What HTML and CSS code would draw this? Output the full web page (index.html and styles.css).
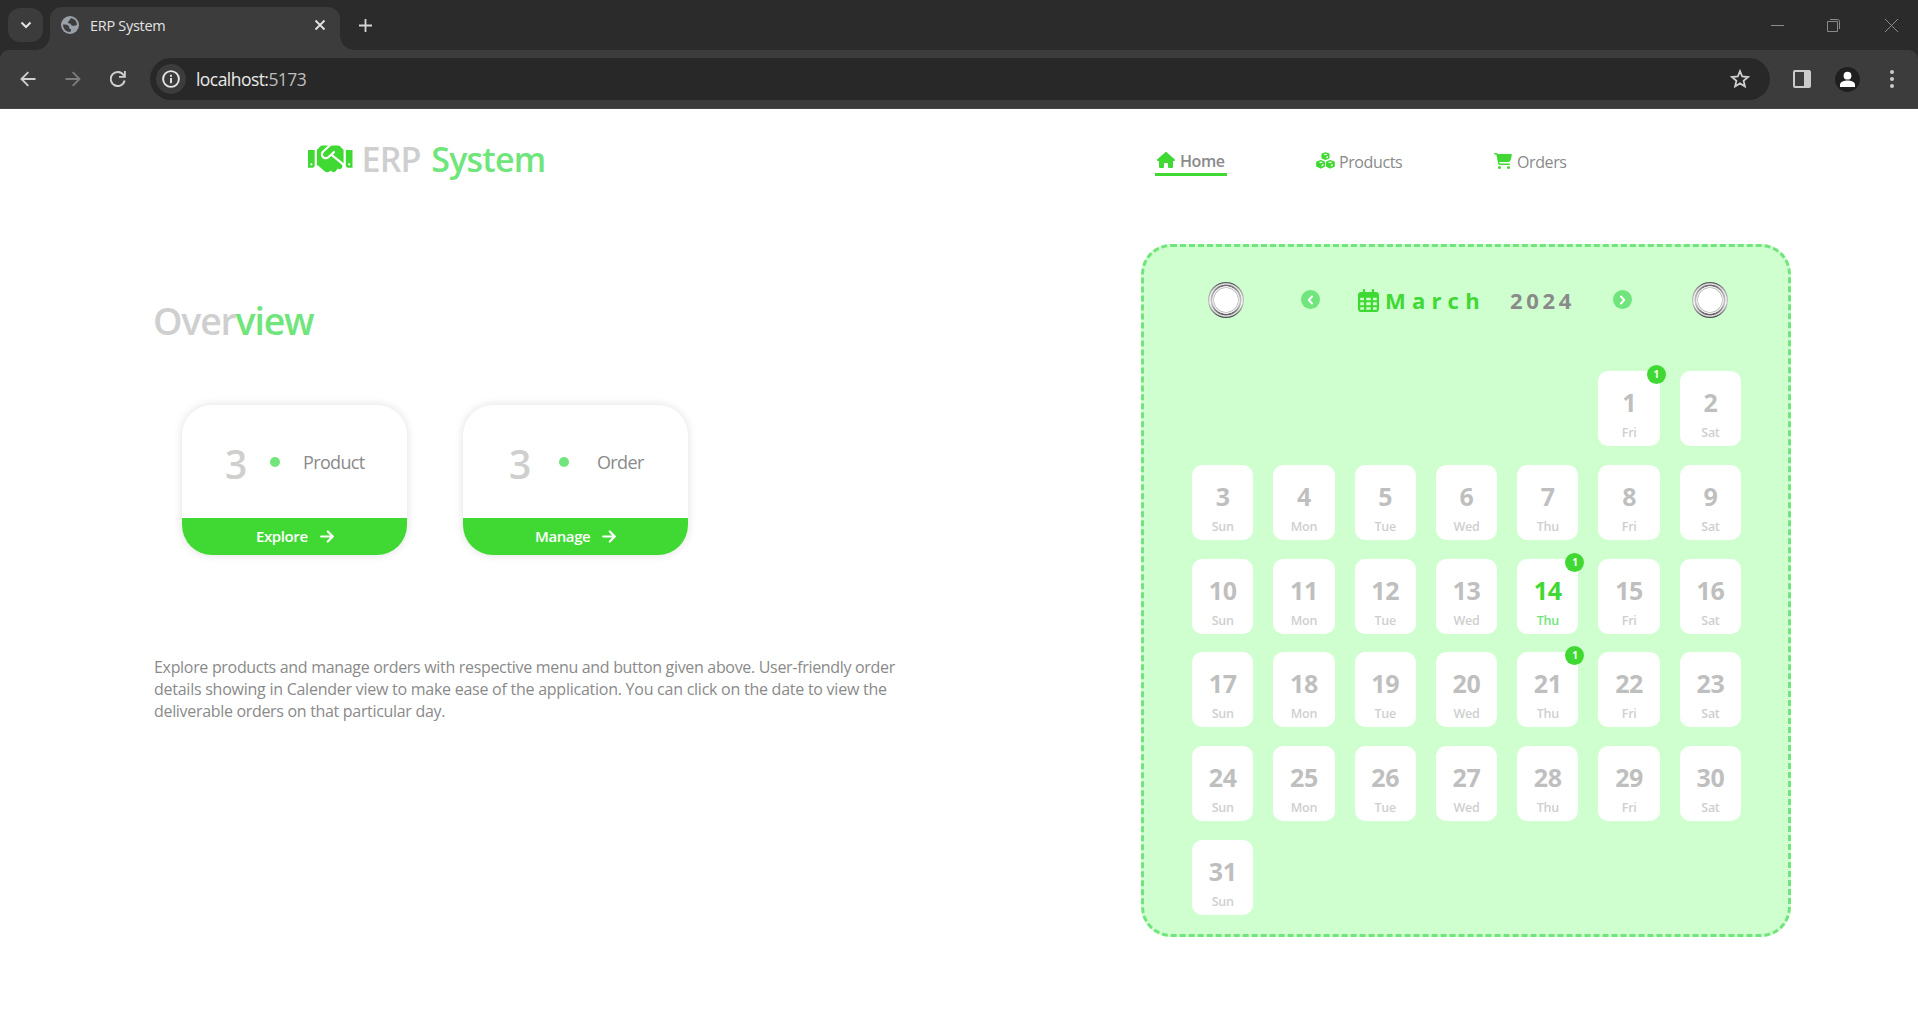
FILE: index.html
```html
<!DOCTYPE html>
<html lang="en">
<head>
<meta charset="utf-8">
<title>ERP System</title>
<link rel="stylesheet" href="styles.css">
</head>
<body>
<div class="browser">
  <div class="tabstrip">
    <div class="tab-search"><svg width="12" height="8" viewBox="0 0 12 8"><path d="M1.5 1.5 6 6l4.500-4.500" fill="none" stroke="#e3e3e3" stroke-width="2"/></svg></div>
    <div class="tab">
      <svg width="18" height="18" viewBox="0 0 18 18"><circle cx="9" cy="9" r="9" fill="#9aa0a8"/><path d="M2 8.500c3 0 5 .3 6 2 .8 1.400-.3 2.500 1.500 2.500 1 0 .7 1.500-.3 3C5.500 16.200 2 13 2 8.500zM10 2.200c3.500.3 5.800 3 6 6.300-1.500 1.300-3 1.500-4.500 1.300C9.500 9.500 10.500 7.500 8.500 7.500 6.500 7.300 6.500 5.500 8 5c1-.3.500-2 2-2.800z" fill="#3c3c3c"/></svg>
      <span class="tab-title">ERP System</span>
      <svg width="12" height="12" viewBox="0 0 12 12"><path d="M1.500 1.500l9 9m0-9l-9 9" stroke="#e3e3e3" stroke-width="1.800"/></svg>
    </div>
    <svg class="new-tab" width="13" height="13" viewBox="0 0 13 13"><path d="M6.500 0v13M0 6.500h13" stroke="#d6d6d6" stroke-width="1.800"/></svg>
    <div class="window-controls">
      <svg width="13" height="13" viewBox="0 0 13 13"><path d="M0 6.500h13" stroke="#8a8a8a"/></svg>
      <svg width="13" height="13" viewBox="0 0 13 13"><path d="M.5 2.500h10v10H.5zM3 .5h7.500a2 2 0 0 1 2 2V10" fill="none" stroke="#8a8a8a"/></svg>
      <svg width="13" height="13" viewBox="0 0 13 13"><path d="M0 0l13 13m0-13L0 13" stroke="#8a8a8a"/></svg>
    </div>
  </div>
  <div class="toolbar">
    <div class="nav-buttons">
      <svg width="16" height="16" viewBox="0 0 16 16"><path d="M15.500 8H2M8.300 1.200 1.500 8l6.800 6.800" fill="none" stroke="#cfcfcf" stroke-width="1.900"/></svg>
      <svg width="16" height="16" viewBox="0 0 16 16"><path d="M.5 8H14M7.700 1.200 14.500 8l-6.800 6.800" fill="none" stroke="#7d7d7d" stroke-width="1.900"/></svg>
      <svg width="16" height="16" viewBox="0 0 16 16"><path d="M14.600 9.500A7 7 0 1 1 13.500 4" fill="none" stroke="#cfcfcf" stroke-width="2"/><path d="M15.800 0v6.800H9V5h3.500l1.500-1.500V0z" fill="#cfcfcf"/></svg>
    </div>
    <div class="address">
      <div class="info"><svg width="18" height="18" viewBox="0 0 18 18"><circle cx="9" cy="9" r="7.900" fill="none" stroke="#e6e6e6" stroke-width="1.900"/><path d="M9 8v5.200M9 4.700v2" stroke="#e6e6e6" stroke-width="1.900"/></svg></div>
      <span class="url">localhost:<span class="port">5173</span></span>
      <svg class="star" width="20" height="20" viewBox="0 0 20 20"><path d="M10 2.200l2.200 5.300 5.800.5-4.400 3.800 1.300 5.600-4.900-3-4.900 3 1.300-5.600L2 8l5.800-.5z" fill="none" stroke="#cfcfcf" stroke-width="1.800"/></svg>
    </div>
    <div class="toolbar-end">
      <svg width="18" height="18" viewBox="0 0 18 18"><rect width="18" height="18" rx="2" fill="#cbcbcb"/><path d="M2 2h9v14H2z" fill="#3c3c3c"/></svg>
      <svg width="25" height="25" viewBox="0 0 25 25"><circle cx="12.500" cy="12.500" r="12.500" fill="#1f1f1f"/><circle cx="12.500" cy="8.700" r="3.900" fill="#fff"/><path d="M5 20v-2.300c0-3 4.500-4.200 7.500-4.200s7.500 1.200 7.500 4.200V20z" fill="#fff"/></svg>
      <svg width="4" height="18" viewBox="0 0 4 18"><g fill="#cbcbcb"><circle cx="2" cy="2" r="2"/><circle cx="2" cy="9" r="2"/><circle cx="2" cy="16" r="2"/></g></svg>
    </div>
  </div>
</div>

<header class="site-header">
  <div class="brand">
    <svg width="44.500" height="35.600" viewBox="0 0 640 512"><path d="M434.7 64h-85.900c-8 0-15.700 3-21.600 8.400l-98.300 90c-.1.1-.2.3-.3.4-16.600 15.600-16.300 40.500-2.100 56 12.700 13.900 39.400 17.600 56.100 2.700.1-.1.3-.1.4-.2l79.900-73.200c6.500-5.900 16.700-5.500 22.600 1 6 6.500 5.500 16.600-1 22.600l-26.100 23.900L504 313.800c2.900 2.400 5.500 5 7.900 7.700V128l-54.600-54.600c-5.900-6-14.100-9.400-22.600-9.400zM544 128.200v223.900c0 17.700 14.300 32 32 32h64V128.200h-96zm48 223.900c-8.800 0-16-7.200-16-16s7.200-16 16-16 16 7.200 16 16-7.200 16-16 16zM0 384h64c17.700 0 32-14.300 32-32V128.200H0V384zm48-63.900c8.800 0 16 7.200 16 16s-7.200 16-16 16-16-7.200-16-16c0-8.900 7.200-16 16-16zm435.900 18.600L334.600 217.500l-30 27.500c-29.700 27.100-75.200 24.500-101.700-4.400-26.900-29.400-24.800-74.900 4.400-101.700L289.100 64h-83.800c-8.500 0-16.600 3.400-22.600 9.400L128 128v223.900h18.300l90.500 81.900c27.400 22.300 67.700 18.100 90-9.300l.2-.2 17.900 15.500c15.900 13 39.400 10.500 52.300-5.400l31.400-38.600 5.400 4.400c13.700 11.100 33.900 9.100 45-4.700l9.500-11.700c11.200-13.800 9.100-33.900-4.600-45.100z"/></svg>
    <span class="brand-name">ERP <span class="accent">System</span></span>
  </div>
  <nav class="menu">
    <a class="active"><svg width="18" height="16" viewBox="0 0 576 512"><path d="M575.8 255.500c0 18-15 32.100-32 32.100h-32l.7 160.200c0 2.700-.2 5.400-.5 8.100V472c0 22.100-17.900 40-40 40H392c-22.100 0-40-17.900-40-40V384c0-17.700-14.300-32-32-32H256c-17.700 0-32 14.300-32 32v88c0 22.100-17.900 40-40 40H104c-22.100 0-40-17.900-40-40V287.600H32c-18 0-32-14-32-32.100 0-9 3-17 10-24L266.400 8c7-7 15-8 22-8s15 2 21 7L564.800 231.500c8 7 12 15 11 24z"/></svg><span>Home</span></a>
    <a class="products"><svg width="19" height="17" viewBox="0 0 576 512"><g stroke-width="36" stroke-linejoin="round" class="cube"><path d="M288 22l105 42v116l-105 46-105-46V64z"/><path d="M148 258l110 44v126l-110 58-124-58V302z"/><path d="M428 258l124 44v126l-124 58-110-58V302z"/></g><path class="facet" d="M288 48l62 24-62 26-62-26zM312 146l52-24v42l-52 24zM148 284l62 26-62 28-62-28zM172 386l56-26v50l-56 26zM428 284l62 26-62 28-62-28zM452 386l56-26v50l-56 26z"/></svg><span>Products</span></a>
    <a class="orders"><svg width="18" height="16" viewBox="0 0 576 512"><path d="M0 24C0 10.700 10.700 0 24 0H69.500c22 0 41.500 12.800 50.600 32h411c26.300 0 45.500 25 38.600 50.400l-41 152.300c-8.500 31.400-37 53.300-69.500 53.300H170.700l5.400 28.500c2.200 11.300 12.100 19.500 23.600 19.500H488c13.300 0 24 10.700 24 24s-10.700 24-24 24H199.700c-34.600 0-64.300-24.600-70.700-58.500L77.400 54.500c-.7-3.800-4-6.500-7.900-6.500H24C10.700 48 0 37.300 0 24zM128 464a48 48 0 1 1 96 0 48 48 0 1 1-96 0zm336-48a48 48 0 1 1 0 96 48 48 0 1 1 0-96z"/></svg><span>Orders</span></a>
  </nav>
</header>

<main class="content">
  <section class="overview">
    <h1>Over<span class="accent">view</span></h1>
    <div class="cards">
      <article class="card">
        <div class="card-body product"><span class="count">3</span><i class="dot"></i><span class="label">Product</span></div>
        <div class="card-action explore"><span>Explore</span><svg width="14" height="13" viewBox="0 0 14 13"><path d="M1.200 6.500H12M7.800 1.500l5 5-5 5"/></svg></div>
      </article>
      <article class="card">
        <div class="card-body order"><span class="count">3</span><i class="dot"></i><span class="label">Order</span></div>
        <div class="card-action manage"><span>Manage</span><svg width="14" height="13" viewBox="0 0 14 13"><path d="M1.200 6.500H12M7.800 1.500l5 5-5 5"/></svg></div>
      </article>
    </div>
    <p class="intro">Explore products and manage orders with respective menu and button given above. User-friendly order<br><span class="loose">details showing in Calender view to make ease of the application. You can click on the date to view the</span><br>deliverable orders on that particular day.</p>
  </section>

  <section class="calendar">
    <div class="calendar-head">
      <i class="ring"></i>
      <button class="step prev"><svg width="7" height="10" viewBox="0 0 7 10"><path d="M5 1.500 1.800 5 5 8.500"/></svg></button>
      <h2><svg width="21" height="23" viewBox="0 0 448 512" preserveAspectRatio="none"><path d="M152 24c0-13.300-10.700-24-24-24s-24 10.700-24 24V64H64C28.700 64 0 92.700 0 128v320c0 35.300 28.700 64 64 64H384c35.300 0 64-28.700 64-64V128c0-35.300-28.700-64-64-64H344V24c0-13.300-10.700-24-24-24s-24 10.700-24 24V64H152V24zM48 192h80v56H48V192zm0 104h80v64H48V296zm128 0h96v64H176V296zm144 0h80v64H320V296zm80-48H320V192h80v56zm0 160v40c0 8.800-7.200 16-16 16H320V408h80zm-128 0v56H176V408h96zm-144 0v56H64c-8.800 0-16-7.200-16-16V408h80zM272 248H176V192h96v56z"/></svg><span class="month">March</span><span class="year">2024</span></h2>
      <button class="step next"><svg width="7" height="10" viewBox="0 0 7 10"><path d="M2 1.500 5.200 5 2 8.500"/></svg></button>
      <i class="ring"></i>
    </div>
    <div class="days">
      <div class="day first"><b>1</b><span>Fri</span><em>1</em></div><div class="day"><b>2</b><span>Sat</span></div>
      <div class="day"><b>3</b><span>Sun</span></div><div class="day"><b>4</b><span>Mon</span></div><div class="day"><b>5</b><span>Tue</span></div><div class="day"><b>6</b><span>Wed</span></div><div class="day"><b>7</b><span>Thu</span></div><div class="day"><b>8</b><span>Fri</span></div><div class="day"><b>9</b><span>Sat</span></div>
      <div class="day"><b>10</b><span>Sun</span></div><div class="day"><b>11</b><span>Mon</span></div><div class="day"><b>12</b><span>Tue</span></div><div class="day"><b>13</b><span>Wed</span></div><div class="day today"><b>14</b><span>Thu</span><em>1</em></div><div class="day"><b>15</b><span>Fri</span></div><div class="day"><b>16</b><span>Sat</span></div>
      <div class="day"><b>17</b><span>Sun</span></div><div class="day"><b>18</b><span>Mon</span></div><div class="day"><b>19</b><span>Tue</span></div><div class="day"><b>20</b><span>Wed</span></div><div class="day"><b>21</b><span>Thu</span><em>1</em></div><div class="day"><b>22</b><span>Fri</span></div><div class="day"><b>23</b><span>Sat</span></div>
      <div class="day"><b>24</b><span>Sun</span></div><div class="day"><b>25</b><span>Mon</span></div><div class="day"><b>26</b><span>Tue</span></div><div class="day"><b>27</b><span>Wed</span></div><div class="day"><b>28</b><span>Thu</span></div><div class="day"><b>29</b><span>Fri</span></div><div class="day"><b>30</b><span>Sat</span></div>
      <div class="day"><b>31</b><span>Sun</span></div>
    </div>
  </section>
</main>
</body>
</html>
```

FILE: styles.css
```css
* { box-sizing: border-box; }
body {
  margin: 0;
  height: 1017px;
  overflow: hidden;
  background: #fff;
  color: #8a8a8a;
  font-family: "Segoe UI", "Open Sans", "Noto Sans", sans-serif;
}
svg { display: block; flex: none; }

/* browser window */
.browser { height: 109px; background: #2b2b2b; border-bottom: 1px solid #4a4446; }
.tabstrip { display: flex; align-items: center; height: 50px; }
.tab-search {
  display: flex; align-items: center; justify-content: center;
  width: 35px; height: 34px; margin-left: 8px; border-radius: 12px; background: #3c3c3c;
}
.tab {
  position: relative;
  display: flex; align-items: center;
  width: 290px; height: 43px; margin: 7px 0 0 7px; padding: 0 14px 7px 11px;
  border-radius: 12px 12px 0 0; background: #3c3c3c;
}
.tab::before, .tab::after {
  content: ""; position: absolute; bottom: 0; width: 14px; height: 14px;
}
.tab::before { left: -14px; background: radial-gradient(circle at 0 0, transparent 13.500px, #3c3c3c 14px); }
.tab::after { right: -14px; background: radial-gradient(circle at 100% 0, transparent 13.500px, #3c3c3c 14px); }
.tab-title { margin-left: 11px; font-size: 14.500px; letter-spacing: -.3px; color: #e3e3e3; }
.tab > svg:last-child { margin-left: auto; }
.new-tab { margin-left: 19px; }
.window-controls { display: flex; gap: 44px; margin: 0 20px 0 auto; }
.window-controls svg:nth-child(2) { margin: 0 1px 0 -1px; }
.toolbar { display: flex; align-items: center; height: 58px; border-radius: 9px 9px 0 0; background: #3c3c3c; }
.nav-buttons { display: flex; gap: 29px; width: 150px; padding-left: 20px; }
.address {
  display: flex; align-items: center;
  width: 1620px; height: 42px; padding: 0 20px 0 6px; border-radius: 21px; background: #282828;
}
.info {
  display: flex; align-items: center; justify-content: center;
  width: 30px; height: 30px; border-radius: 50%; background: #3c3c3c;
}
.url { margin-left: 10px; font-size: 17.500px; letter-spacing: -.55px; color: #e8e8e8; }
.port { color: #bdbdbd; }
.star { margin-left: auto; }
.toolbar-end { display: flex; align-items: center; margin-left: 23px; }
.toolbar-end svg:nth-child(2) { margin-left: 24px; }
.toolbar-end svg:nth-child(3) { margin-left: 30px; }

/* site header */
.site-header { display: flex; height: 135px; padding: 24px 0 0 308px; }
.brand { display: flex; align-items: center; width: 847px; height: 52px; }
.brand svg, .menu svg, h2 svg { fill: #40d933; }
.brand-name { margin-left: 9px; font-size: 34px; font-weight: 600; letter-spacing: -.8px; word-spacing: 2.500px; color: #cfcfcf; white-space: nowrap; }
.accent { color: #70e57c; }
.menu { display: flex; padding-top: 13px; }
.menu a { display: flex; align-items: center; height: 30px; font-size: 16px; letter-spacing: -.4px; }
.menu a svg { margin-bottom: 1px; }
.menu a span { margin-left: 5px; padding-top: 1px; }
.menu .active { width: 72px; padding: 0 0 0 2px; border-bottom: 3px solid #40d933; font-weight: 600; }
.menu .active svg { margin-bottom: 0; }
.menu .active span { padding-top: 2px; }
.menu .products { margin-left: 89px; width: 90px; }
.menu .products span { margin-left: 4px; }
.menu .orders { margin-left: 88px; }
.cube { fill: #40d933; stroke: #40d933; }
.facet { fill: #fff; }

/* overview */
.content { display: flex; padding-left: 154px; }
.overview { width: 987px; }
h1 { margin: 51px 0 0 -1px; height: 52px; line-height: 52px; font-size: 37.500px; font-weight: 600; letter-spacing: -1.200px; color: #cfcfcf; }
.cards { display: flex; gap: 56px; padding: 58px 0 0 28px; }
.card { width: 225px; height: 150px; border-radius: 30px; overflow: hidden; box-shadow: 0 0 10px rgba(0, 0, 0, .13); }
.card-body { display: flex; align-items: center; height: 113px; padding-top: 1px; }
.product { padding-left: 43px; }
.order { padding-left: 46px; }
.count { width: 22px; padding-top: 2px; font-size: 39px; font-weight: 600; color: #cfcfcf; }
.dot { width: 10px; height: 10px; border-radius: 50%; background: #70e57c; margin-left: 23px; }
.order .dot { margin-left: 28px; }
.product .label { margin-left: 23px; }
.order .label { margin-left: 28px; }
.label { font-size: 18px; letter-spacing: -.65px; }
.card-action { display: flex; align-items: center; gap: 12px; height: 37px; background: #40d933; color: #fff; font-size: 15px; font-weight: 600; letter-spacing: -.4px; }
.card-action span { padding-bottom: 1px; }
.explore { padding-left: 74px; }
.manage { padding-left: 72px; }
.card-action svg { fill: none; stroke: #fff; stroke-width: 2.200; stroke-linecap: round; stroke-linejoin: round; }
.intro { margin: 101px 0 0; font-size: 16px; line-height: 22px; letter-spacing: -.315px; white-space: nowrap; }
.loose { letter-spacing: -.25px; }

/* calendar */
.calendar { width: 650px; height: 693px; border: 3px dashed #70e57c; border-radius: 30px; background: #cfffcf; padding: 35px 47px 0 48px; }
.calendar-head { display: flex; align-items: center; height: 36px; padding: 0 13px 0 16px; }
.ring {
  flex: none; width: 36px; height: 36px; border-radius: 50%;
  background:
    radial-gradient(circle, #fff 11.500px, #b5b5b5 12.200px, #f2f2f2 13px, #e6e6e6 13.600px, transparent 14px),
    radial-gradient(circle, transparent 15px, rgba(255, 255, 255, .85) 15.800px, rgba(255, 255, 255, .6) 16.600px, transparent 17.200px),
    linear-gradient(#555, #aaa 30%, #c4c4c4 60%, #444);
}
.step { display: flex; align-items: center; justify-content: center; width: 19px; height: 19px; margin-top: -1px; padding: 0; border: 0; border-radius: 50%; background: #70e57c; }
.step svg { fill: none; stroke: #fff; stroke-width: 2; stroke-linecap: round; stroke-linejoin: round; }
.prev { margin-left: 57px; }
.next { margin-left: auto; margin-right: 60px; }
h2 { display: flex; align-items: center; margin: 0 0 0 38px; font-size: 22px; white-space: nowrap; }
.month { margin-left: 6px; width: 125px; letter-spacing: 6.200px; color: #40d933; }
.year { letter-spacing: 3.700px; }
.days { display: grid; grid-template-columns: repeat(7, 61.300px); grid-auto-rows: 75px; gap: 18.800px 20px; padding-top: 53px; }
.day { position: relative; display: flex; flex-direction: column; align-items: center; border-radius: 10px; background: #fff; }
.day.first { grid-column: 6; }
.day b { margin-top: 14px; height: 34px; line-height: 34px; font-size: 25px; letter-spacing: -.3px; color: #bfbfbf; }
.day span { margin-top: 5px; height: 18px; line-height: 18px; font-size: 12.500px; font-weight: 600; letter-spacing: -.3px; color: #cfcfcf; }
.day em {
  position: absolute; top: -6px; right: -6px; width: 19px; height: 19px; border-radius: 50%;
  background: #40d933; color: #fff; font-size: 10px; font-style: normal; font-weight: 700; line-height: 19px; text-align: center;
}
.day.today b { color: #40d933; }
.day.today span { color: #70e57c; }
```
